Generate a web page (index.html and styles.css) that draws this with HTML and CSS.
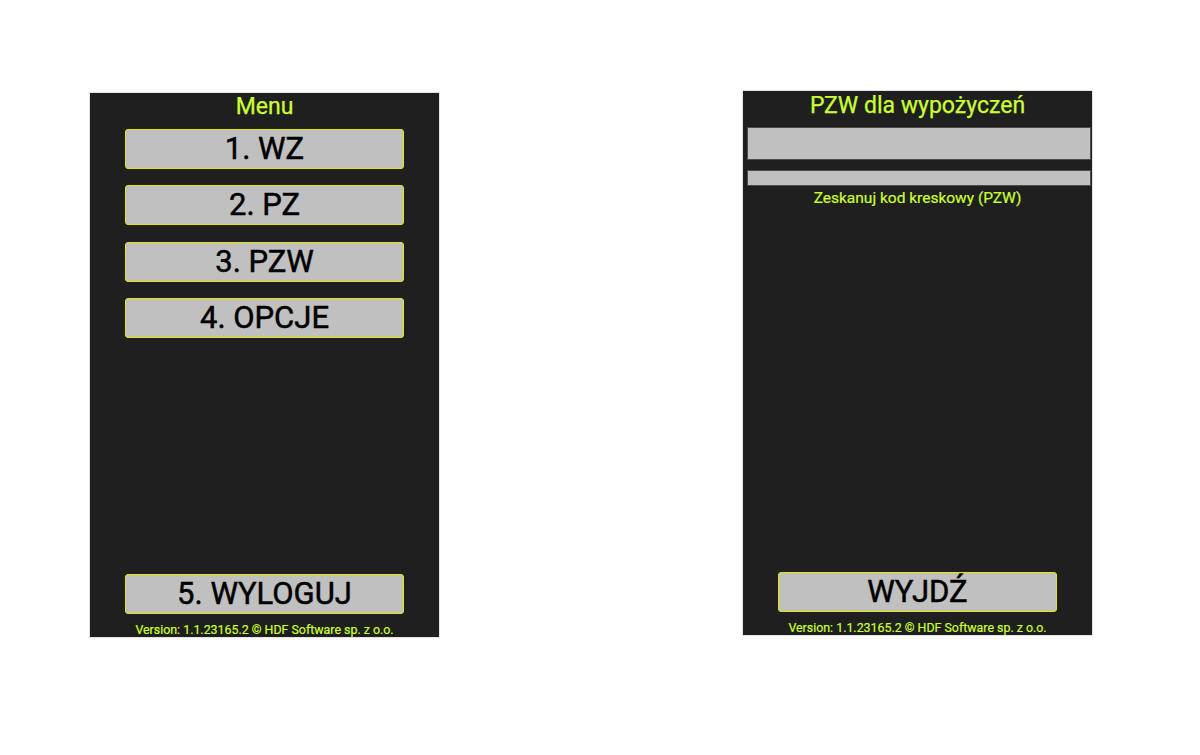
FILE: index.html
```html
<!DOCTYPE html>
<html lang="pl">
<head>
<meta charset="utf-8">
<title>Menu</title>
<link rel="stylesheet" href="styles.css">
</head>
<body>
<div class="screens">
  <section class="panel panel-menu">
    <h1 class="title">Menu</h1>
    <div class="menu-list">
      <button class="btn">1. WZ</button>
      <button class="btn">2. PZ</button>
      <button class="btn">3. PZW</button>
      <button class="btn">4. OPCJE</button>
    </div>
    <div class="spacer"></div>
    <button class="btn">5. WYLOGUJ</button>
    <div class="version">Version: 1.1.23165.2 © HDF Software sp. z o.o.</div>
  </section>

  <section class="panel panel-pzw">
    <h1 class="title">PZW dla wypożyczeń</h1>
    <input class="field field-big" type="text">
    <input class="field field-small" type="text">
    <div class="hint">Zeskanuj kod kreskowy (PZW)</div>
    <div class="spacer"></div>
    <button class="btn">WYJDŹ</button>
    <div class="version">Version: 1.1.23165.2 © HDF Software sp. z o.o.</div>
  </section>
</div>
</body>
</html>
```

FILE: styles.css
```css
html, body {
  margin: 0;
  padding: 0;
  background: #ffffff;
}

body {
  font-family: Roboto, "Liberation Sans", sans-serif;
}

.screens {
  display: flex;
  align-items: flex-start;
  padding-left: 89px;
  gap: 302px;
}

.panel {
  box-sizing: border-box;
  width: 351px;
  height: 546px;
  background: #1f1f1f;
  border: 1px solid #e4e4e4;
  display: flex;
  flex-direction: column;
  align-items: center;
}

.panel-menu {
  margin-top: 92px;
}

.panel-pzw {
  margin-top: 90px;
}

.title {
  margin: 0;
  font-size: 23px;
  font-weight: 400;
  line-height: 27px;
  color: #ccff33;
  text-align: center;
  -webkit-text-stroke: 0.25px #ccff33;
}

.panel-pzw .title {
  line-height: 29px;
}

.menu-list {
  width: 100%;
  margin-top: 9px;
  display: flex;
  flex-direction: column;
  align-items: center;
  gap: 16.33px;
}

.btn {
  box-sizing: border-box;
  width: 279px;
  height: 40px;
  margin: 0;
  padding: 0;
  background: #c0c0c0;
  border: 1px solid #e6e600;
  border-radius: 3px;
  font-family: Roboto, "Liberation Sans", sans-serif;
  font-size: 31px;
  line-height: 38px;
  color: #000000;
  text-align: center;
  -webkit-text-stroke: 0.5px #000000;
}

.spacer {
  flex: 1;
}

.version {
  margin-top: 8px;
  font-size: 12.4px;
  line-height: 15px;
  color: #ccff33;
  text-align: center;
  white-space: nowrap;
  -webkit-text-stroke: 0.2px #ccff33;
}

.field {
  box-sizing: border-box;
  display: block;
  align-self: stretch;
  margin: 0 1px 0 4px;
  padding: 0;
  background: #c0c0c0;
  border: 1px solid #4c4c4c;
  outline: none;
}

.field-big {
  margin-top: 7px;
  height: 33px;
}

.field-small {
  margin-top: 10px;
  height: 16px;
}

.hint {
  margin-top: 2px;
  font-size: 15.5px;
  line-height: 20px;
  color: #ccff33;
  text-align: center;
  -webkit-text-stroke: 0.2px #ccff33;
}
```
